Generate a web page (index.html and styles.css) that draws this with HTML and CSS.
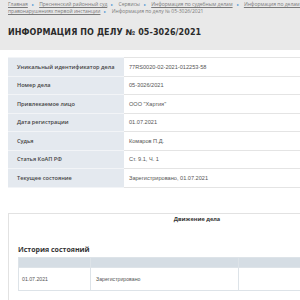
FILE: index.html
```html
<!DOCTYPE html>
<html lang="ru">
<head>
    <meta charset="UTF-8">
    <meta name="viewport" content="width=device-width, initial-scale=1.0">
    <title>Информация по делу № 05-3026/2021</title>
    <link rel="stylesheet" href="styles.css">
</head>
<body>
    <div class="page">
        <header class="top">
            <nav class="crumbs">
                <a href="#">Главная</a><span class="sep">&#9656;</span>
                <a href="#">Пресненский районный суд</a><span class="sep">&#9656;</span>
                <span class="plain">Сервисы</span><span class="sep">&#9656;</span>
                <a href="#">Информация по судебным делам</a><span class="sep">&#9656;</span>
                <a href="#">Информация по делам об административных правонарушениях первой инстанции</a><span class="sep">&#9656;</span>
                <span class="plain">Информация по делу № 05-3026/2021</span>
            </nav>
            <h1 class="title">Информация по делу № 05-3026/2021</h1>
        </header>

        <main class="content">
            <table class="info">
                <tr><th>Уникальный идентификатор дела</th><td>77RS0020-02-2021-012253-58</td></tr>
                <tr><th>Номер дела</th><td>05-3026/2021</td></tr>
                <tr><th>Привлекаемое лицо</th><td>ООО "Хартия"</td></tr>
                <tr><th>Дата регистрации</th><td>01.07.2021</td></tr>
                <tr><th>Судья</th><td>Комаров П.Д.</td></tr>
                <tr><th>Статья КоАП РФ</th><td>Ст. 9.1, Ч. 1</td></tr>
                <tr><th>Текущее состояние</th><td>Зарегистрировано, 01.07.2021</td></tr>
            </table>

            <section class="movement">
                <div class="tab">Движение дела</div>
                <h2 class="subtitle">История состояний</h2>
                <table class="history">
                    <tr class="head"><th></th><th></th><th></th></tr>
                    <tr><td>01.07.2021</td><td>Зарегистрировано</td><td></td></tr>
                </table>
                <h2 class="subtitle">Исполнение</h2>
            </section>
        </main>
    </div>
</body>
</html>
```

FILE: styles.css
```css
html, body {
    margin: 0;
    padding: 0;
    overflow: hidden;
    background: #fff;
}
.page {
    width: 394px;
    font-family: "Open Sans", "Liberation Sans", sans-serif;
    color: #333;
}
.top {
    background: #e9e9e9;
    height: 50px;
    padding: 1px 8px 0;
    box-sizing: border-box;
}
.crumbs {
    font-size: 5px;
    line-height: 7px;
    color: #7a7a7a;
}
.crumbs a {
    color: #7a7a7a;
    text-decoration: underline;
}
.crumbs .sep {
    color: #3d8fd1;
    margin: 0 4px;
    font-size: 4px;
}
.title {
    margin: 13px 0 0;
    font-family: "DejaVu Sans", sans-serif;
    font-weight: bold;
    font-size: 8px;
    line-height: 10px;
    text-transform: uppercase;
    letter-spacing: 0.1px;
    color: #2b2b2b;
}
.content {
    padding: 7px 8px 0;
}
.info {
    width: 378px;
    border-collapse: collapse;
    font-size: 5.6px;
}
.info th,
.info td {
    height: 18.5px;
    padding: 0 0 0 9px;
    text-align: left;
    box-sizing: border-box;
    border-top: 1px solid #e4e4e4;
    border-bottom: 1px solid #e4e4e4;
}
.info th {
    width: 116px;
    background: #e4e9ef;
    font-weight: 600;
    color: #444;
    border-color: #f2f4f7;
}
.info td {
    padding-left: 5px;
    color: #555;
    font-family: "Liberation Sans", sans-serif;
}
.movement {
    margin-top: 25px;
    border: 1px solid #e2e2e2;
    padding: 1px 9px 0;
    height: 120px;
}
.tab {
    text-align: center;
    font-size: 5.6px;
    line-height: 8px;
    font-weight: 700;
    color: #333;
}
.subtitle {
    margin: 22px 0 0;
    font-size: 7px;
    line-height: 10px;
    font-weight: 700;
    color: #333;
}
.history {
    margin-top: 2px;
    width: 380px;
    border-collapse: collapse;
    font-size: 5.2px;
    font-family: "Liberation Sans", sans-serif;
    color: #555;
}
.history th,
.history td {
    border: 1px solid #dde3e8;
    padding: 0 0 0 5px;
    text-align: left;
}
.history .head th {
    background: #d5dde4;
    height: 9px;
}
.history td {
    height: 22px;
}
.history tr > :first-child {
    width: 68px;
    padding-left: 3px;
}
.history tr > :nth-child(2) {
    width: 142px;
}
.history + .subtitle {
    margin-top: 7px;
}
```
